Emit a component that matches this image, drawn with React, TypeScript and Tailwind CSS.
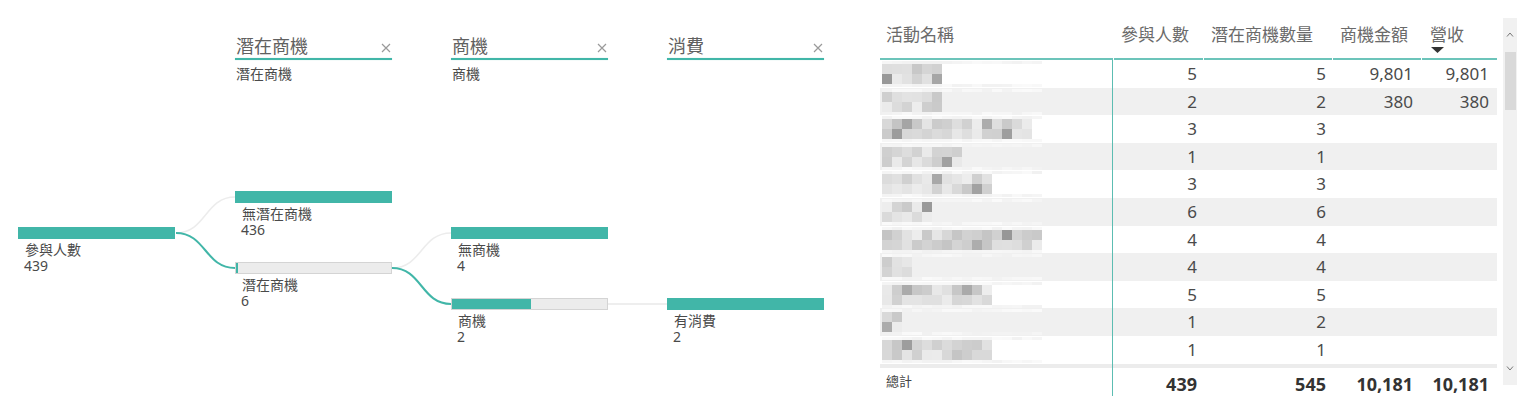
import React from "react";

const TEAL = "#41b6a8";

const font = { fontFamily: '"Noto Sans", "Noto Sans CJK TC", sans-serif' };

type NodeProps = {
  x: number;
  y: number;
  label: string;
  value: string;
  fill: number; // teal px width, or -1 for full
  tick?: boolean;
};

function TreeNode({ x, y, label, value, fill, tick }: NodeProps) {
  const full = fill < 0;
  return (
    <div className="absolute w-[157px]" style={{ left: x, top: y }}>
      {full ? (
        <div className="h-[12px] bg-[#41b6a8]" />
      ) : (
        <div className="flex h-[12px] border border-[#d4d4d4] bg-[#ececec]">
          {tick ? (
            <div className="h-full w-[2px] bg-[#41b6a8]" />
          ) : (
            <div className="h-full bg-[#41b6a8]" style={{ width: fill }} />
          )}
        </div>
      )}
      <div className="mt-[3px] pl-[7px] text-[14px] leading-[16px] text-[#4a4a4a]">
        <div>{label}</div>
        <div className="-ml-px">{value}</div>
      </div>
    </div>
  );
}

function LevelHeader({ x, title, sub }: { x: number; title: string; sub?: string }) {
  return (
    <div className="absolute top-[35px] w-[157px]" style={{ left: x }}>
      <div className="flex items-center justify-between pl-px">
        <span className="text-[18px] leading-[23px] text-[#606060]">{title}</span>
        <svg width="10" height="10" viewBox="0 0 10 10" className="mr-[1px] mt-[2px]">
          <path d="M1 1 L9 9 M9 1 L1 9" stroke="#9a9a9a" strokeWidth="1.2" />
        </svg>
      </div>
      <div className="h-[2px] bg-[#41b6a8] shadow-[0_0_1px_#8fd6cd]" />
      {sub && <div className="mt-[5px] pl-px text-[14px] leading-[18px] text-[#4a4a4a]">{sub}</div>}
    </div>
  );
}

function DecompTree() {
  return (
    <div className="relative h-[419px] w-[880px] shrink-0">
      <svg className="absolute left-0 top-0" width="880" height="419">
        <path d="M176 233 C 206 233, 205 197, 235 197" fill="none" stroke="#ececec" strokeWidth="1.5" />
        <path d="M176 233 C 206 233, 205 268, 235 268" fill="none" stroke={TEAL} strokeWidth="2" />
        <path d="M392 268 C 422 268, 421 233, 451 233" fill="none" stroke="#ececec" strokeWidth="1.5" />
        <path d="M392 268 C 422 268, 421 304, 451 304" fill="none" stroke={TEAL} strokeWidth="2" />
        <path d="M608 304 L 667 304" fill="none" stroke="#e8e8e8" strokeWidth="1.5" />
      </svg>

      <LevelHeader x={235} title="潛在商機" sub="潛在商機" />
      <LevelHeader x={451} title="商機" sub="商機" />
      <LevelHeader x={667} title="消費" />

      <TreeNode x={18} y={227} label="參與人數" value="439" fill={-1} />
      <TreeNode x={235} y={191} label="無潛在商機" value="436" fill={-1} />
      <TreeNode x={235} y={262} label="潛在商機" value="6" fill={0} tick />
      <TreeNode x={451} y={227} label="無商機" value="4" fill={-1} />
      <TreeNode x={451} y={298} label="商機" value="2" fill={79} />
      <TreeNode x={667} y={298} label="有消費" value="2" fill={-1} />
    </div>
  );
}

// pixelated (blurred) activity names
function rng(seed: number) {
  let a = seed;
  return () => {
    a |= 0;
    a = (a + 0x6d2b79f5) | 0;
    let t = Math.imul(a ^ (a >>> 15), 1 | a);
    t = (t + Math.imul(t ^ (t >>> 7), 61 | t)) ^ t;
    return ((t ^ (t >>> 14)) >>> 0) / 4294967296;
  };
}

function grey(v: number) {
  const n = Math.round(v);
  return `rgb(${n},${n},${n})`;
}

function Mosaic({ seed, len }: { seed: number; len: number }) {
  const r = rng(seed);
  const faint = () => Array.from({ length: 16 }, () => grey(241 + r() * 9));
  const dark = () =>
    Array.from({ length: 16 }, (_, i) => {
      if (i >= len) return "transparent";
      const d = r();
      return grey(d < 0.07 ? 150 + r() * 30 : 196 + r() * 42);
    });
  const bands = [
    { h: 3, c: faint() },
    { h: 10, c: dark() },
    { h: 10, c: dark() },
    { h: 3, c: faint() },
  ];
  return (
    <div className="flex flex-col pl-[2px] pt-px">
      {bands.map((b, bi) => (
        <div key={bi} className="flex">
          {b.c.map((c, i) => (
            <div key={i} className="w-[10px]" style={{ height: b.h, background: c }} />
          ))}
        </div>
      ))}
    </div>
  );
}

const rows = [
  { len: 6, a: "5", b: "5", c: "9,801", d: "9,801" },
  { len: 6, a: "2", b: "2", c: "380", d: "380" },
  { len: 15, a: "3", b: "3", c: "", d: "" },
  { len: 8, a: "1", b: "1", c: "", d: "" },
  { len: 11, a: "3", b: "3", c: "", d: "" },
  { len: 5, a: "6", b: "6", c: "", d: "" },
  { len: 16, a: "4", b: "4", c: "", d: "" },
  { len: 3, a: "4", b: "4", c: "", d: "" },
  { len: 11, a: "5", b: "5", c: "", d: "" },
  { len: 2, a: "1", b: "2", c: "", d: "" },
  { len: 11, a: "1", b: "1", c: "", d: "" },
];

const colW = ["w-[90px]", "w-[129px]", "w-[89px]", "w-[76px]"];

function ValueTable() {
  return (
    <div className="flex pt-[18px]">
      <div className="w-[617px]">
        {/* header */}
        <div className="flex h-[42px] text-[17px] leading-[23px] text-[#6a6a6a]">
          <div className="w-[233px] border-b-2 border-[#6cc4ba] pl-[6px] pt-[5px]">活動名稱</div>
          <div className="ml-px w-[89px] border-b-2 border-[#6cc4ba] pl-[7px] pt-[5px]">參與人數</div>
          <div className="ml-px w-[128px] border-b-2 border-[#6cc4ba] pl-[7px] pt-[5px] whitespace-nowrap">潛在商機數量</div>
          <div className="ml-px w-[88px] border-b-2 border-[#6cc4ba] pl-[7px] pt-[5px]">商機金額</div>
          <div className="ml-px flex w-[75px] flex-col border-b-2 border-[#6cc4ba] pl-[8px] pt-[5px]">
            <span>營收</span>
            <svg width="13" height="6" viewBox="0 0 13 6" className="ml-[1px] mt-px">
              <path d="M0 0 L13 0 L6.5 6 Z" fill="#333" />
            </svg>
          </div>
        </div>

        {/* body */}
        {rows.map((row, i) => (
          <div
            key={i}
            className={`flex h-[27.6px] text-[17px] leading-[24px] text-[#4a4a4a] ${i % 2 === 1 ? "bg-[#f0f0f0]" : "bg-white"}`}
          >
            <div className="w-[233px] overflow-hidden border-r border-[#5cbdb2]">
              <Mosaic seed={i * 97 + 13} len={row.len} />
            </div>
            {[row.a, row.b, row.c, row.d].map((v, j) => (
              <div key={j} className={`${colW[j]} pt-[2px] text-right ${j >= 2 ? "pr-[8px]" : "pr-[6px]"}`}>
                {v}
              </div>
            ))}
          </div>
        ))}

        <div className="flex h-[4px] bg-[#ececec]">
          <div className="w-[233px] border-r border-[#5cbdb2]" />
        </div>

        {/* total */}
        <div className="flex h-[28px]">
          <div className="w-[233px] border-r border-[#5cbdb2] pl-[6px] pt-[4px] text-[13px] leading-[18px] text-[#444]">總計</div>
          {["439", "545", "10,181", "10,181"].map((v, j) => (
            <div
              key={j}
              className={`${colW[j]} pt-[4px] text-right text-[18px] font-bold leading-[24px] text-[#333] ${j >= 2 ? "pr-[8px]" : "pr-[6px]"}`}
            >
              {v}
            </div>
          ))}
        </div>
      </div>

      {/* scrollbar */}
      <div className="ml-[6px] flex h-[367px] w-[14px] flex-col items-center bg-[#f1f1f1]">
        <svg width="8" height="5" viewBox="0 0 8 5" className="mt-[14px]">
          <path d="M1 4.5 L4 1 L7 4.5" fill="none" stroke="#777" strokeWidth="1" />
        </svg>
        <div className="mt-[15px] h-[58px] w-[11px] bg-[#d9d9d9]" />
        <div className="flex-1" />
        <svg width="8" height="5" viewBox="0 0 8 5" className="mb-[14px]">
          <path d="M1 0.5 L4 4 L7 0.5" fill="none" stroke="#777" strokeWidth="1" />
        </svg>
      </div>
    </div>
  );
}

export default function App() {
  return (
    <div className="flex h-[419px] w-[1520px] overflow-hidden bg-white" style={font}>
      <DecompTree />
      <ValueTable />
    </div>
  );
}
